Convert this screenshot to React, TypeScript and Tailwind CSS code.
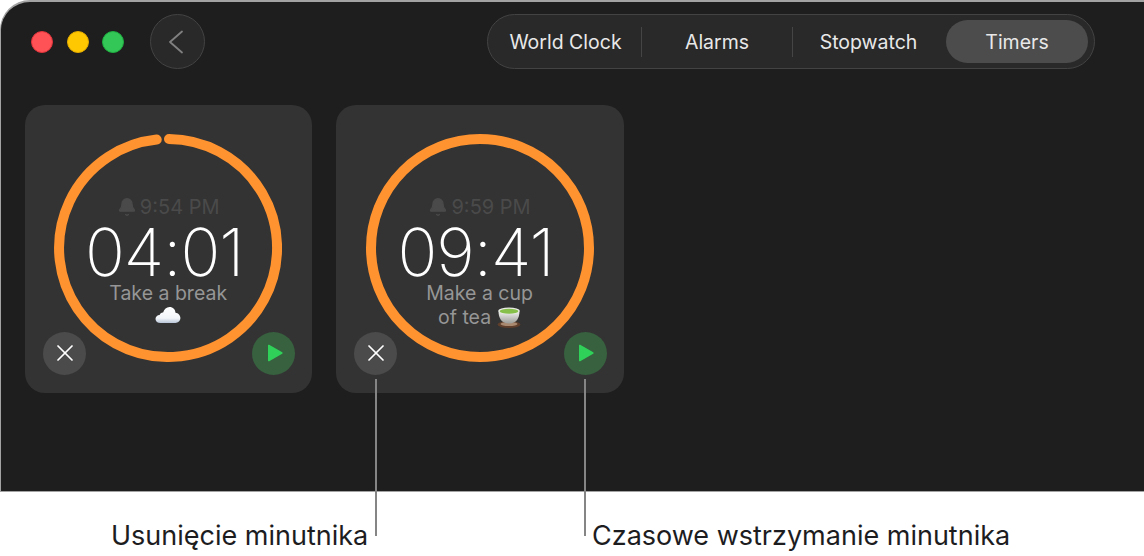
import { Bell, X } from "lucide-react";

function TrafficLights() {
  return (
    <div className="flex gap-[13.5px]">
      <div className="w-[22px] h-[22px] rounded-full bg-[#ff5257] border border-[#e0343b]" />
      <div className="w-[22px] h-[22px] rounded-full bg-[#ffc800] border border-[#e3ab00]" />
      <div className="w-[22px] h-[22px] rounded-full bg-[#33c758] border border-[#1fae40]" />
    </div>
  );
}

function Tabs() {
  return (
    <div className="flex items-center w-[608px] h-[55px] rounded-full bg-[#292929] border border-[#434343] pl-[2px] pr-[6px]">
      <div className="w-[151px] text-center pt-[2px]">World Clock</div>
      <div className="w-px h-[30px] bg-[#454545]" />
      <div className="w-[150px] text-center pt-[2px]">Alarms</div>
      <div className="w-px h-[30px] bg-[#454545]" />
      <div className="w-[151px] text-center pt-[2px]">Stopwatch</div>
      <div className="flex-1 h-[43px] ml-[2px] pt-[2px] rounded-full bg-[#4c4c4c] flex items-center justify-center">Timers</div>
    </div>
  );
}

function Cloud() {
  return (
    <svg width="26" height="18" viewBox="0 0 26 18">
      <defs>
        <linearGradient id="cloud" x1="0" y1="0" x2="0" y2="1">
          <stop offset="0" stopColor="#ffffff" />
          <stop offset="0.7" stopColor="#f2f5f9" />
          <stop offset="1" stopColor="#b9c6d8" />
        </linearGradient>
      </defs>
      <path
        d="M5.5 17C2.5 17 .5 15.2.5 12.9c0-2.2 1.8-3.9 4.1-4 .5-1.5 1.9-2.5 3.5-2.3C9.2 3.2 11.500 1 14.500 1c3.600 0 5.900 2.600 6 5.800 2.800.3 4.900 2.700 4.900 5.300 0 2.900-2.200 4.900-5 4.900z"
        fill="url(#cloud)"
      />
    </svg>
  );
}

function TeaCup() {
  return (
    <svg width="24" height="21" viewBox="0 0 24 21">
      <defs>
        <linearGradient id="cup" x1="0" y1="0" x2="0" y2="1">
          <stop offset="0" stopColor="#f4f4f2" />
          <stop offset="1" stopColor="#9b9b98" />
        </linearGradient>
      </defs>
      <ellipse cx="12" cy="17.500" rx="11.500" ry="3.500" fill="#5f3f2c" />
      <ellipse cx="12" cy="17" rx="8.500" ry="2" fill="#a98a70" />
      <path d="M1.500 4c0 7 3 12.500 10.500 12.500S22.500 11 22.500 4z" fill="url(#cup)" />
      <ellipse cx="12" cy="3.800" rx="10.800" ry="3.300" fill="#e9ebe4" />
      <ellipse cx="12" cy="4.200" rx="9.300" ry="2.500" fill="#86c04a" />
    </svg>
  );
}

function TimerCard({
  alarm,
  time,
  arc,
  children,
}: {
  alarm: string;
  time: string;
  arc?: boolean;
  children: React.ReactNode;
}) {
  return (
    <div className="relative w-[287.400px] h-[287.500px] rounded-[20px] bg-[#333333] flex justify-center pt-[29px]">
      <div className="relative w-[228px] h-[228px] -ml-[1px] flex flex-col items-center pt-[59px]">
        <svg className="absolute inset-0" width="228" height="228" viewBox="0 0 228 228" fill="none">
          {arc ? (
            <path
              d="M115 5A109 109 0 1 1 102.700 5.590"
              stroke="#ff9330"
              strokeWidth="10"
              strokeLinecap="round"
            />
          ) : (
            <circle cx="114" cy="114" r="109" stroke="#ff9330" strokeWidth="10" />
          )}
        </svg>
        <div className="flex items-center gap-[3px] h-[28px] text-[20px] text-[#4a4a4a]">
          <Bell size={20} fill="#4a4a4a" strokeWidth={1.5} />
          <span>{alarm}</span>
        </div>
        <div className="text-[66px] leading-[66px] tracking-[-1px] font-extralight text-white -mt-[2px] -ml-[8px]">
          {time}
        </div>
        <div className="text-[19.5px] leading-[24px] text-[#969696] text-center -mt-[4px] w-[160px]">{children}</div>
      </div>
      <div className="absolute left-[18px] bottom-[18px] w-[43px] h-[43px] rounded-full bg-[#4b4b4b] flex items-center justify-center">
        <X size={28} color="#ffffff" strokeWidth={1.5} />
      </div>
      <div className="absolute right-[17px] bottom-[18px] w-[43px] h-[43px] rounded-full bg-[#37613f] flex items-center justify-center">
        <svg width="18" height="20" viewBox="0 0 18 20" className="ml-[2px]">
          <path
            d="M2 2.500v15a.8.8 0 0 0 1.200.7l13-7.500a.8.8 0 0 0 0-1.400L3.200 1.800A.8.8 0 0 0 2 2.500z"
            fill="#30d158"
          />
        </svg>
      </div>
    </div>
  );
}

export default function App() {
  return (
    <div className="relative w-[1144px] h-[556px] bg-white overflow-hidden font-[family-name:Inter,sans-serif]">
      <div className="h-[492px] rounded-tl-[30px] border-t-2 border-l border-b border-[#a3a3a3] bg-[#1e1e1e]">
        <div className="flex items-center h-[79px] pl-[30px] text-[19.5px] text-[#e8e8e8]">
          <TrafficLights />
          <div className="ml-[26px] w-[55px] h-[55px] rounded-full bg-[#292929] border border-[#434343] flex items-center justify-center">
            <svg width="16" height="24" viewBox="0 0 16 24" fill="none" className="-ml-[4px]">
              <path d="M14 1.500L2 12l12 10.500" stroke="#808080" strokeWidth="1.800" strokeLinecap="round" strokeLinejoin="round" />
            </svg>
          </div>
          <div className="ml-[282px]">
            <Tabs />
          </div>
        </div>
        <div className="flex gap-[24px] pl-[24px] pt-[24px]">
          <TimerCard alarm="9:54 PM" time="04:01" arc>
            <div>Take a break</div>
            <div className="flex justify-center mt-[1px]">
              <Cloud />
            </div>
          </TimerCard>
          <TimerCard alarm="9:59 PM" time="09:41">
            <div>Make a cup</div>
            <div className="flex justify-center items-center gap-[6px]">
              of tea <TeaCup />
            </div>
          </TimerCard>
        </div>
      </div>
      <div className="flex pt-[27px] text-[27px] leading-[34px] text-[#1d1d1f]">
        <div className="ml-[111px] w-[481px]">Usunięcie minutnika</div>
        <div>Czasowe wstrzymanie minutnika</div>
      </div>
      <div className="absolute left-[375px] top-[379px] w-[2px] h-[157px] bg-[#858585]" />
      <div className="absolute left-[584px] top-[379px] w-[2px] h-[157px] bg-[#858585]" />
    </div>
  );
}
